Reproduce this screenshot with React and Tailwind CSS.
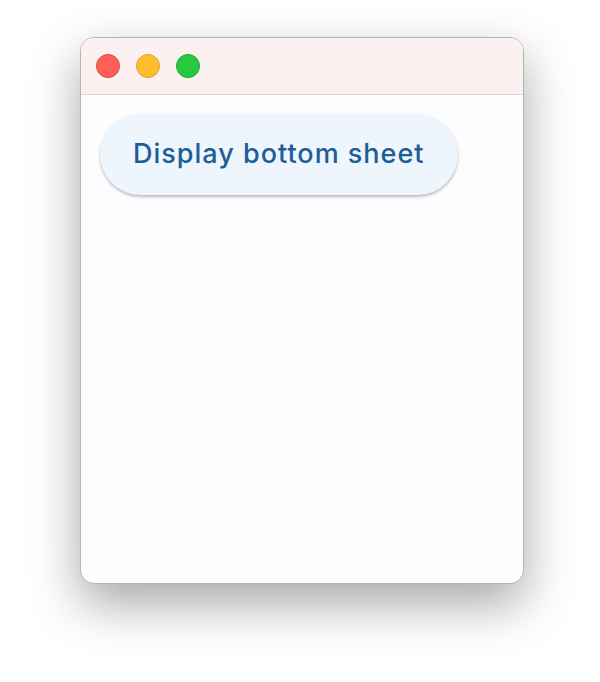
export default function App() {
    return (
        <div className="flex h-[682px] w-[600px] bg-white pl-[80px] pt-[37px]">
            <div className="flex h-[547px] w-[444px] flex-col overflow-hidden rounded-[14px] border border-[#b5b5b5] bg-[#fdfdff] shadow-[0_20px_50px_rgba(0,0,0,0.35)]">
                <div className="flex h-[57px] shrink-0 items-center gap-[16px] border-b border-[#dcd6d6] bg-[#faf1f0] pl-[15px]">
                    <span className="h-[24px] w-[24px] rounded-full border border-[#e0443e] bg-[#ff5f57]" />
                    <span className="h-[24px] w-[24px] rounded-full border border-[#dea123] bg-[#febc2e]" />
                    <span className="h-[24px] w-[24px] rounded-full border border-[#1aab29] bg-[#28c840]" />
                </div>
                <div className="flex-1 px-[19px] pt-[19px]">
                    <button className="h-[81px] rounded-full bg-[#eef5fc] px-[33px] font-['Inter',sans-serif] text-[27px] font-medium tracking-[1px] text-[#1b5e98] shadow-[0_2px_3px_rgba(0,0,0,0.25)]">
                        Display bottom sheet
                    </button>
                </div>
            </div>
        </div>
    );
}
